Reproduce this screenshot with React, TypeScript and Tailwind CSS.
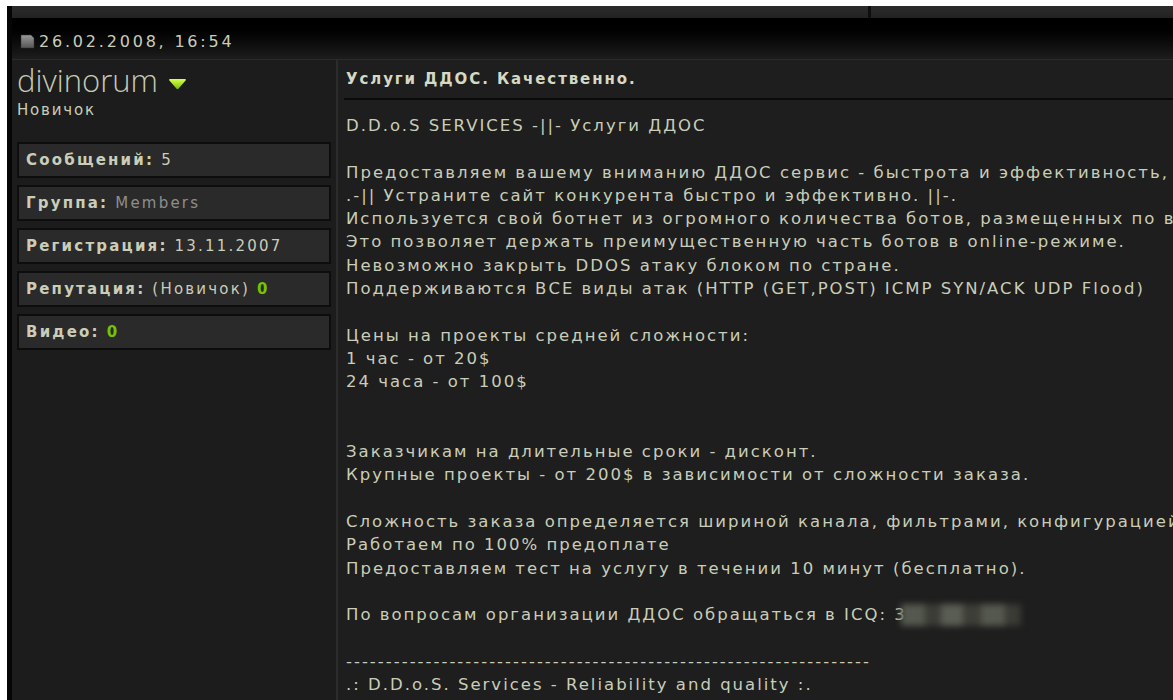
import React from 'react';

const body = "font-['DejaVu_Sans',Verdana,sans-serif]";

const lines: string[] = [
  'D.D.o.S SERVICES -||- Услуги ДДОС',
  '',
  'Предоставляем вашему вниманию ДДОС сервис - быстрота и эффективность, надежность и анонимность.',
  '.-|| Устраните сайт конкурента быстро и эффективно. ||-.',
  'Используется свой ботнет из огромного количества ботов, размещенных по всему миру.',
  'Это позволяет держать преимущественную часть ботов в online-режиме.',
  'Невозможно закрыть DDOS атаку блоком по стране.',
  'Поддерживаются ВСЕ виды атак (HTTP (GET,POST) ICMP SYN/ACK UDP Flood)',
  '',
  'Цены на проекты средней сложности:',
  '1 час - от 20$',
  '24 часа - от 100$',
  '',
  '',
  'Заказчикам на длительные сроки - дисконт.',
  'Крупные проекты - от 200$ в зависимости от сложности заказа.',
  '',
  'Сложность заказа определяется шириной канала, фильтрами, конфигурацией сервера.',
  'Работаем по 100% предоплате',
  'Предоставляем тест на услугу в течении 10 минут (бесплатно).',
  '',
];

const PostIcon = () => (
  <svg width="15" height="15" viewBox="0 0 15 15">
    <defs>
      <linearGradient id="pg" x1="0" y1="0" x2="0" y2="1">
        <stop offset="0" stopColor="#9a9a9a" />
        <stop offset="1" stopColor="#555" />
      </linearGradient>
    </defs>
    <path d="M1 1h10l3 3v10H1z" fill="url(#pg)" stroke="#333" strokeWidth="0.5" />
  </svg>
);

const MenuArrow = () => (
  <svg width="19" height="12" viewBox="0 0 19 12">
    <defs>
      <linearGradient id="ag" x1="0" y1="0" x2="0" y2="1">
        <stop offset="0" stopColor="#d8ff50" />
        <stop offset="1" stopColor="#78c000" />
      </linearGradient>
    </defs>
    <path d="M2 1h15q1.5 0 .6 1.4L10.6 10.4q-1.1 1.2-2.2 0L1.4 2.4Q.5 1 2 1z" fill="url(#ag)" />
  </svg>
);

const Stat = ({ children }: { children: React.ReactNode }) => (
  <div className="h-[36px] flex items-center px-[7px] bg-[#2a2a2a] border-2 border-[#0d0d0d] text-[15px] tracking-[2.2px] text-[#c9cdb9] whitespace-nowrap">
    {children}
  </div>
);

export default function App() {
  return (
    <div className={`h-[700px] w-[1173px] overflow-hidden bg-white pt-[6px] pl-[7px] ${body}`}>
      <div className="h-full bg-[#050505] pl-[5px] flex flex-col">
        {/* top strip */}
        <div className="h-[12px] flex shrink-0">
          <div className="w-[856px] bg-gradient-to-b from-[#2c2c2c] to-[#222]" />
          <div className="w-[3px] bg-[#0e0e0e]" />
          <div className="flex-1 bg-gradient-to-b from-[#2c2c2c] to-[#222]" />
        </div>

        {/* post header */}
        <div className="h-[42px] shrink-0 flex items-center gap-[4px] pl-[8px] pt-[6px] bg-gradient-to-b from-[#000] via-[#080808] to-[#1d1d1d] border-b border-[#2a2a2a]">
          <PostIcon />
          <span className="text-[16px] tracking-[2.8px] text-[#c9cdb9]">26.02.2008, 16:54</span>
        </div>

        <div className="flex flex-1 min-h-0">
          {/* author column */}
          <div className="w-[326px] shrink-0 bg-[#1c1c1c] border-r-2 border-[#2c2c2c]">
            <div className="flex items-center gap-[10px] pl-[5px] pt-[2px] h-[38px]">
              <span className="font-['Open_Sans',sans-serif] font-light text-[31px] leading-[34px] text-[#c5c9b5]">divinorum</span>
              <span className="pt-[8px]"><MenuArrow /></span>
            </div>
            <div className="mt-[3px] pl-[5px] text-[15px] tracking-[1.8px] text-[#c9cdb9] leading-[18px]">Новичок</div>
            <div className="flex flex-col gap-[7px] mt-[23px] ml-[5px] w-[314px]">
              <Stat><b>Сообщений:</b>&nbsp;5</Stat>
              <Stat><b>Группа:</b>&nbsp;<span className="text-[#8e8e8e]">Members</span></Stat>
              <Stat><b>Регистрация:</b>&nbsp;13.11.2007</Stat>
              <Stat><b>Репутация:</b>&nbsp;(Новичок)&nbsp;<b className="text-[#74c400]">0</b></Stat>
              <Stat><b>Видео:</b>&nbsp;<b className="text-[#74c400]">0</b></Stat>
            </div>
          </div>

          {/* post body */}
          <div className="flex-1 min-w-0 bg-[#1e1e1e] overflow-hidden pl-[6px]">
            <div className="h-[38px] flex items-center pl-[2px] text-[15px] font-bold tracking-[1.9px] text-[#d4d8c4] whitespace-nowrap">
              Услуги ДДОС. Качественно.
            </div>
            <div className="h-[2px] bg-[#0a0a0a]" />
            <div className="pt-[14px] pl-[2px] text-[16.5px] tracking-[2px] leading-[23.3px] text-[#c9cdb9] whitespace-nowrap">
              {lines.map((l, i) => (
                <div key={i} className="h-[23.3px]">{l}</div>
              ))}
              <div className="h-[23.3px] flex items-center">
                По вопросам организации ДДОС обращаться в ICQ: 3
                <span className="inline-flex ml-[-6px] h-[22px] w-[130px] blur-[3px]">
                  <span className="w-[24px] bg-[#55584e]" />
                  <span className="w-[16px] bg-[#3a3c35]" />
                  <span className="w-[22px] bg-[#5a5d53]" />
                  <span className="w-[18px] bg-[#3c3e37]" />
                  <span className="w-[24px] bg-[#55584e]" />
                  <span className="w-[16px] bg-[#393b34]" />
                </span>
              </div>
              <div className="h-[23.3px]" />
              <div className="h-[23.3px]">{'-'.repeat(66)}</div>
              <div className="h-[23.3px]">.: D.D.o.S. Services - Reliability and quality :.</div>
            </div>
          </div>
        </div>
      </div>
    </div>
  );
}
